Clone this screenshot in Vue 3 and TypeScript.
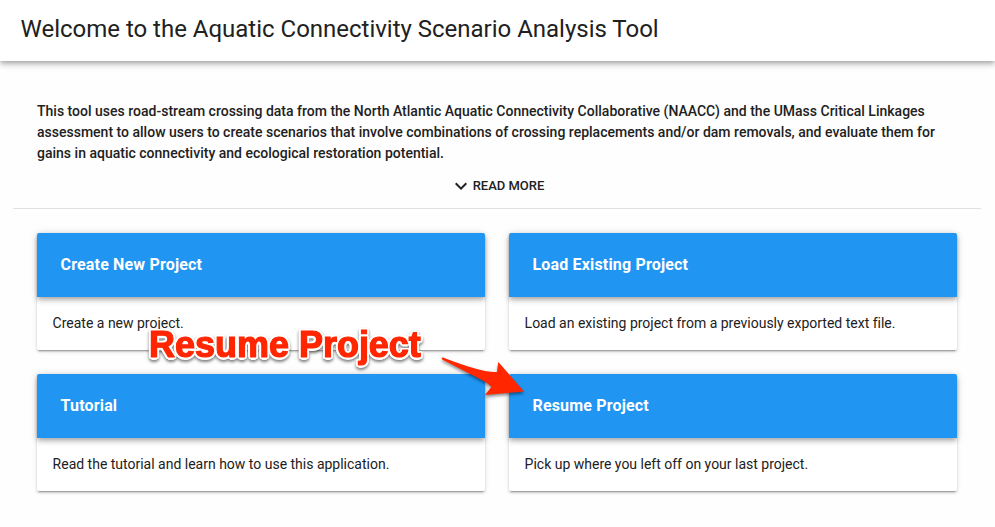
<script setup lang="ts">
interface ProjectCard {
  title: string
  text: string
}

const cards: ProjectCard[] = [
  { title: 'Create New Project', text: 'Create a new project.' },
  { title: 'Load Existing Project', text: 'Load an existing project from a previously exported text file.' },
  { title: 'Tutorial', text: 'Read the tutorial and learn how to use this application.' },
  { title: 'Resume Project', text: 'Pick up where you left off on your last project.' },
]
</script>

<template>
  <div class="page">
    <header class="toolbar">
      <h1>Welcome to the Aquatic Connectivity Scenario Analysis Tool</h1>
    </header>
    <main class="content">
      <section class="intro">
        <p>
          This tool uses road-stream crossing data from the North Atlantic Aquatic Connectivity Collaborative (NAACC) and the UMass Critical Linkages<br />
          assessment to allow users to create scenarios that involve combinations of crossing replacements and/or dam removals, and evaluate them for<br />
          gains in aquatic connectivity and ecological restoration potential.
        </p>
        <button class="more" type="button">
          <svg width="24" height="24" viewBox="0 0 24 24" aria-hidden="true">
            <path d="M7.41 8.59 12 13.17l4.59-4.58L18 10l-6 6-6-6z" fill="#212121" />
          </svg>
          <span>READ MORE</span>
        </button>
      </section>
      <section class="grid">
        <article v-for="card in cards" :key="card.title" class="card">
          <h2>{{ card.title }}</h2>
          <p>{{ card.text }}</p>
        </article>
      </section>
    </main>
    <div class="callout-text">Resume Project</div>
    <svg class="callout" width="995" height="527" viewBox="0 0 995 527">
      <path
        class="callout-arrow"
        d="M443 357.5 Q467 367 485 371 Q492 372.3 497 372 L498.3 362 L524 391.5 L485 395 L491.5 386.8 Q488 383 482 380 L442.5 359.8 Q440.5 357.3 443 357.5 Z"
      />
    </svg>
  </div>
</template>

<style>
body {
  margin: 0;
  background: #fefefe;
}
</style>

<style scoped>
.page {
  position: relative;
  box-sizing: border-box;
  height: 527px;
  overflow: hidden;
  color: #212121;
  font-family: Roboto, sans-serif;
}
.toolbar {
  position: relative;
  box-sizing: border-box;
  display: flex;
  align-items: center;
  height: 61px;
  padding: 0 20.5px 4px;
  background: #fff;
  box-shadow: 0 2px 4px -1px rgba(0, 0, 0, 0.2), 0 4px 5px rgba(0, 0, 0, 0.14), 0 1px 10px rgba(0, 0, 0, 0.12);
}
h1 {
  margin: 0;
  font-size: 24px;
  font-weight: 400;
  letter-spacing: -0.01px;
  line-height: 30px;
  white-space: nowrap;
}
.content {
  padding: 40px 14px 0 13px;
}
.intro {
  display: flex;
  flex-direction: column;
  align-items: center;
  box-sizing: border-box;
  height: 108px;
  padding: 0 24px;
  border-bottom: 1px solid #e0e0e0;
}
.intro p {
  align-self: stretch;
  margin: 0;
  font-size: 14px;
  font-weight: 500;
  letter-spacing: 0.005px;
  line-height: 21px;
  white-space: nowrap;
}
.more {
  display: flex;
  align-items: center;
  height: 24px;
  margin: 10px 0 0 -1px;
  padding: 0;
  border: 0;
  background: none;
  color: inherit;
  font: 500 13px/24px Roboto, sans-serif;
}
.grid {
  display: grid;
  grid-template-columns: 448px 448px;
  gap: 24px;
  padding: 24px;
}
.card {
  height: 117px;
  border-radius: 2px;
  background: #fff;
  box-shadow: 0 3px 1px -2px rgba(0, 0, 0, 0.2), 0 2px 2px rgba(0, 0, 0, 0.14), 0 1px 5px rgba(0, 0, 0, 0.12);
}
.card h2 {
  margin: 0;
  padding: 0 23.5px;
  border-radius: 2px 2px 0 0;
  background: #2095f2;
  box-shadow: 0 2px 4px -1px rgba(0, 0, 0, 0.2), 0 4px 5px rgba(0, 0, 0, 0.14), 0 1px 10px rgba(0, 0, 0, 0.12);
  color: #fff;
  font-size: 16px;
  font-weight: 700;
  letter-spacing: 0.17px;
  line-height: 64px;
}
.card p {
  margin: 0;
  padding: 16px 15.6px 0;
  font-size: 14px;
  letter-spacing: -0.005px;
  line-height: 21px;
}
.callout {
  position: absolute;
  top: 0;
  left: 0;
  pointer-events: none;
}
.callout-text {
  position: absolute;
  top: 324px;
  left: 149px;
  color: #ff2600;
  font: 700 36px/41px 'Liberation Sans', sans-serif;
  letter-spacing: -0.02px;
  white-space: nowrap;
  -webkit-text-stroke: 1.2px #ff2600;
  text-shadow: 2.5px 0 #fff, -2.5px 0 #fff, 0 2.5px #fff, 0 -2.5px #fff, 1.8px 1.8px #fff, -1.8px 1.8px #fff,
    1.8px -1.8px #fff, -1.8px -1.8px #fff, 2.3px 1px #fff, -2.3px 1px #fff, 2.3px -1px #fff, -2.3px -1px #fff,
    1px 2.3px #fff, -1px 2.3px #fff, 1px -2.3px #fff, -1px -2.3px #fff;
  filter: drop-shadow(0 2px 1.5px rgba(0, 0, 0, 0.5));
}
.callout-arrow {
  fill: #ff2600;
  filter: drop-shadow(0 2px 1.5px rgba(0, 0, 0, 0.45));
}
</style>
